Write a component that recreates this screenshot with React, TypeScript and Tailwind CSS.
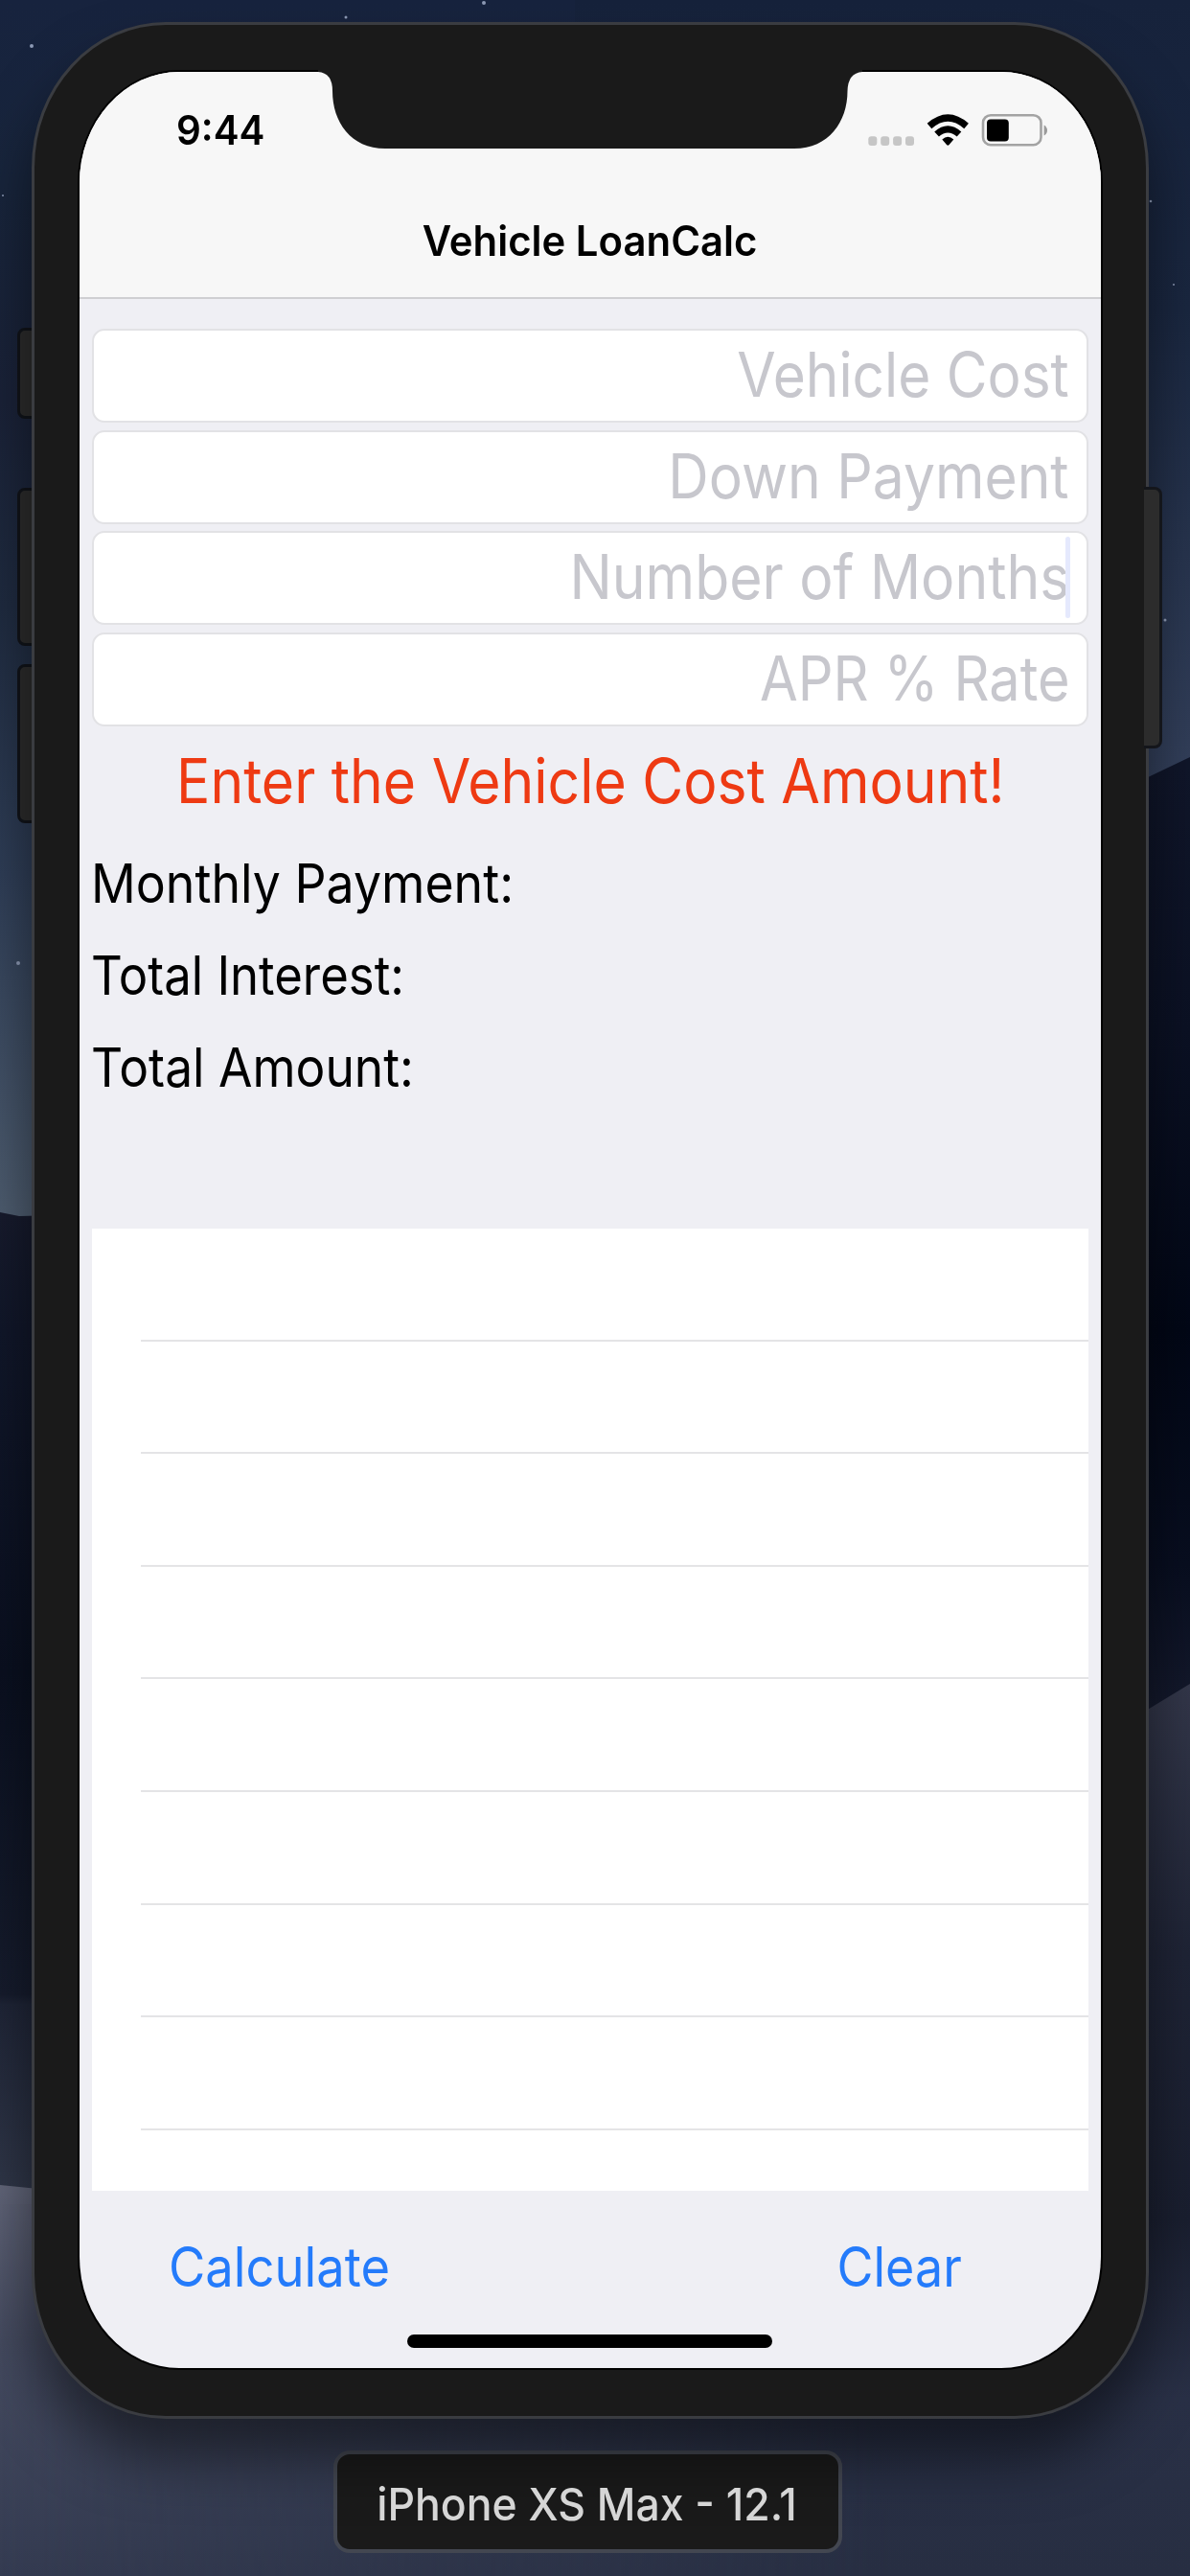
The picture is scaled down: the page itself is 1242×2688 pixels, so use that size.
const fields = [
  { label: "Vehicle Cost", fit: "scale-x-[0.915]" },
  { label: "Down Payment", fit: "scale-x-[0.918]" },
  { label: "Number of Months", fit: "scale-x-[0.92]", caret: true },
  { label: "APR % Rate", fit: "scale-x-[0.9]" },
];
const results = [
  { label: "Monthly Payment:", fit: "scale-x-[0.925]" },
  { label: "Total Interest:", fit: "scale-x-[0.908]" },
  { label: "Total Amount:", fit: "scale-x-[0.919]" },
];
const stars = [
  [33, 48, 2], [361, 18, 1.5], [505, 3, 2], [19, 1005, 2], [1201, 210, 1.3], [1216, 647, 1.5], [3, 204, 1], [1225, 297, 1],
];

function Wallpaper() {
  return (
    <svg className="absolute inset-0 h-full w-full" viewBox="0 0 1242 2688" preserveAspectRatio="none" aria-hidden="true">
      <defs>
        <linearGradient id="skyL" gradientUnits="userSpaceOnUse" x1="0" y1="0" x2="0" y2="1267">
          <stop offset="0" stopColor="#17233e" />
          <stop offset="0.15" stopColor="#18253c" />
          <stop offset="0.33" stopColor="#1a2238" />
          <stop offset="0.5" stopColor="#1f2b40" />
          <stop offset="0.72" stopColor="#2f3e57" />
          <stop offset="1" stopColor="#4e5d70" />
        </linearGradient>
        <linearGradient id="skyR" gradientUnits="userSpaceOnUse" x1="0" y1="0" x2="0" y2="812">
          <stop offset="0" stopColor="#16223b" />
          <stop offset="0.4" stopColor="#1a2740" />
          <stop offset="1" stopColor="#33405b" />
        </linearGradient>
        <linearGradient id="duneL" gradientUnits="userSpaceOnUse" x1="0" y1="1267" x2="0" y2="2285">
          <stop offset="0" stopColor="#171b2d" />
          <stop offset="0.12" stopColor="#11172a" />
          <stop offset="0.47" stopColor="#0a1020" />
          <stop offset="0.8" stopColor="#161c2d" />
          <stop offset="0.81" stopColor="#1f2537" />
          <stop offset="1" stopColor="#303749" />
        </linearGradient>
        <linearGradient id="duneR" gradientUnits="userSpaceOnUse" x1="0" y1="800" x2="0" y2="1780">
          <stop offset="0" stopColor="#10162a" />
          <stop offset="0.28" stopColor="#0b1124" />
          <stop offset="0.6" stopColor="#020716" />
          <stop offset="0.85" stopColor="#080e20" />
          <stop offset="1" stopColor="#14192c" />
        </linearGradient>
        <linearGradient id="sandL" gradientUnits="userSpaceOnUse" x1="0" y1="2280" x2="0" y2="2688">
          <stop offset="0" stopColor="#62667a" />
          <stop offset="0.4" stopColor="#454b60" />
          <stop offset="1" stopColor="#343b51" />
        </linearGradient>
        <linearGradient id="sandR" gradientUnits="userSpaceOnUse" x1="0" y1="1760" x2="0" y2="2688">
          <stop offset="0" stopColor="#33374a" />
          <stop offset="0.3" stopColor="#1f2436" />
          <stop offset="0.6" stopColor="#1a1f30" />
          <stop offset="0.8" stopColor="#293046" />
          <stop offset="1" stopColor="#272e42" />
        </linearGradient>
        <linearGradient id="sandFade" x1="0" y1="0" x2="1" y2="0">
          <stop offset="0" stopColor="#fff" stopOpacity="0" />
          <stop offset="0.75" stopColor="#fff" />
        </linearGradient>
        <mask id="fade" maskUnits="userSpaceOnUse" x="0" y="1700" width="1242" height="988">
          <rect x="0" y="1700" width="1242" height="988" fill="url(#sandFade)" />
        </mask>
      </defs>
      <rect width="700" height="2688" fill="url(#skyL)" />
      <rect x="600" width="642" height="2688" fill="url(#skyR)" />
      <path d="M0 1265 L20 1269 L60 1268 H621 V2300 H0Z" fill="url(#duneL)" />
      <path d="M621 860 L1196 812 L1242 790 V1900 H621Z" fill="url(#duneR)" />
      <path d="M0 2280 L40 2284 L621 2300 H1242 V2688 H0Z" fill="url(#sandL)" />
      <path d="M0 2300 H621 L1196 1785 L1242 1757 V2688 H0Z" fill="url(#sandR)" mask="url(#fade)" />
      {stars.map(([x, y, r]) => (
        <circle key={`${x}-${y}`} cx={x} cy={y} r={r} fill="#8d9ab5" />
      ))}
    </svg>
  );
}

function StatusIcons() {
  return (
    <svg className="block h-[40px] w-[190px]" viewBox="906 116 190 40" aria-hidden="true">
      {[906.3, 919.2, 932.1, 945].map((x) => (
        <rect key={x} x={x} y="142.3" width="9" height="9.6" rx="3" fill="#c6c6c6" />
      ))}
      <g fill="none" stroke="#000" strokeWidth="7">
        <path d="M970 131.5 Q989.3 114.5 1008.6 131.5" />
        <path d="M977.6 140 Q989.3 129.6 1001 140" />
      </g>
      <path d="M983.3 145.6 Q989.3 139.8 995.3 145.6 L990.6 151 Q989.3 152.3 988 151Z" />
      <rect x="1026" y="120.2" width="60.5" height="31" rx="8" fill="none" stroke="#a3a3a3" strokeWidth="2.6" />
      <rect x="1030" y="124.4" width="22.8" height="23" rx="4" />
      <path d="M1089.6 130.5 Q1093 132.5 1093 136 Q1093 139.5 1089.6 141.5Z" fill="#9a9a9a" />
    </svg>
  );
}

export default function App() {
  return (
    <div className="relative h-[2688px] w-[1242px] overflow-hidden bg-[#171f33] font-['Inter',sans-serif] leading-none">
      <Wallpaper />
      <div className="absolute left-[18px] top-[342px] h-[95px] w-[24px] rounded-[8px] border-[3px] border-[#11141a] bg-[#2c2c2c]" />
      <div className="absolute left-[18px] top-[509px] h-[165px] w-[24px] rounded-[8px] border-[3px] border-[#11141a] bg-[#2c2c2c]" />
      <div className="absolute left-[18px] top-[693px] h-[166px] w-[24px] rounded-[8px] border-[3px] border-[#11141a] bg-[#2c2c2c]" />

      <div className="relative flex h-full flex-col pl-[33px] pt-[23px]">
        <div className="relative h-[2501px] w-[1166px] rounded-[140px/152px] border-[3px] border-[#3a3c41] bg-[#1a1a1a] px-[47px] pt-[49px] shadow-[0_40px_60px_rgba(0,0,0,0.5)]">
          <main className="flex h-[2396px] w-[1066px] flex-col overflow-hidden rounded-[104px/116px] bg-[#efeff4] shadow-[0_0_0_2px_#000]">
            <header className="h-[237px] shrink-0 border-b-2 border-[#cfcfd2] bg-[#f7f7f7]">
              <div className="flex h-[122px] items-center justify-between pl-[101px] pr-[53px]">
                <span className="origin-left scale-x-[0.96] text-[42px] font-semibold">9:44</span>
                <StatusIcons />
              </div>
              <div className="flex h-[110px] items-center justify-center">
                <h1 className="scale-x-[0.963] text-[43.5px] font-semibold">Vehicle LoanCalc</h1>
              </div>
            </header>

            <section className="mx-[13px] mt-[31px] flex h-[415px] shrink-0 flex-col justify-between">
              {fields.map((f) => (
                <div key={f.label} className="relative flex h-[98px] items-center justify-end rounded-[13px] border-2 border-[#e2e2e5] bg-white pb-[2px] pr-[18px] text-[64px] text-[#c7c7cd]">
                  <span className={`origin-right whitespace-nowrap ${f.fit}`}>{f.label}</span>
                  {f.caret && <i className="absolute right-[17px] top-[4px] h-[85px] w-[5px] rounded-full bg-[#e5e9fd]" />}
                </div>
              ))}
            </section>

            <p className="mt-[25px] flex h-[64px] shrink-0 items-center justify-center text-[64px] text-[#ee3a13]">
              <span className="scale-x-[0.919] whitespace-nowrap">Enter the Vehicle Cost Amount!</span>
            </p>

            <section className="ml-[12px] mt-[47px] flex shrink-0 flex-col gap-[40px] text-[56px]">
              {results.map((r) => (
                <p key={r.label} className="flex h-[56px] items-center">
                  <span className={`origin-left whitespace-nowrap ${r.fit}`}>{r.label}</span>
                </p>
              ))}
            </section>

            <section className="mx-[13px] mt-[140px] h-[1004px] shrink-0 overflow-hidden bg-white pl-[51px]">
              {Array.from({ length: 8 }, (_, i) => (
                <div key={i} className="h-[117.6px] border-b-2 border-[#e4e4e6]" />
              ))}
            </section>

            <footer className="flex h-[150px] shrink-0 items-center justify-between pl-[93px] pr-[145px] pt-[8px] text-[57px] text-[#247bfb]">
              <button className="origin-left scale-x-[0.921]">Calculate</button>
              <button className="origin-right scale-x-[0.912]">Clear</button>
            </footer>
            <div className="ml-[342px] h-[14px] w-[381px] shrink-0 rounded-full bg-black" />
          </main>
          <svg className="absolute left-[295px] top-[46px] h-[84px] w-[570px]" viewBox="0 -3 570 84" aria-hidden="true">
            <path d="M1 -3 V0 Q16 1 16 20 C16 52 35 80 71 80 H498 C534 80 553.500 52 553.500 20 Q554 1 569 0 V-3Z" fill="#1a1a1a" />
          </svg>
        </div>

        <div className="ml-[315px] mt-[33px] flex h-[107px] w-[531px] items-center justify-center rounded-[17px] border-4 border-[#434751] bg-[#1a1a1a] pr-[2px] pt-[4px] text-[47px] font-medium text-[#d6d6d6]">
          <span className="scale-x-[0.947] whitespace-nowrap">iPhone XS Max - 12.1</span>
        </div>
      </div>

      <div className="absolute left-[1194px] top-[508px] h-[273px] w-[19px] rounded-r-[8px] border-[3px] border-l-0 border-[#14161b] bg-[#2c2c2c]" />
    </div>
  );
}
